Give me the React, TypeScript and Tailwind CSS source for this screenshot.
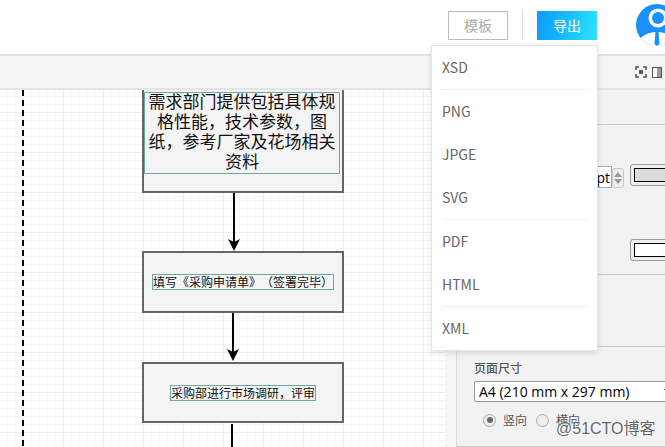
const exportGroups = [['XSD'], ['PNG', 'JPGE', 'SVG'], ['PDF', 'HTML'], ['XML']]

function Avatar() {
  return (
    <svg width="42" height="42" viewBox="0 0 42 42" className="shrink-0">
      <defs>
        <clipPath id="avatar-clip">
          <circle cx="21" cy="21" r="21" />
        </clipPath>
      </defs>
      <g clipPath="url(#avatar-clip)">
        <rect width="42" height="42" fill="#1a90fb" />
        <circle cx="22" cy="14" r="9.5" fill="#fff" />
        <circle cx="22" cy="14" r="6" fill="#1a90fb" />
        <ellipse cx="21" cy="46" rx="22" ry="18" fill="#fff" />
        <path d="M19.5 27h3l1 13-2.5 2-2.5-2z" fill="#1a90fb" />
      </g>
    </svg>
  )
}

function ExportMenu() {
  return (
    <div className="absolute left-[431px] top-[45px] z-20 w-[167px] h-[306px] bg-white border border-[#e6e6e6] shadow-[0_2px_6px_rgba(0,0,0,0.12)] px-[10px]">
      {exportGroups.map((group, i) => (
        <div key={i} className={i < exportGroups.length - 1 ? 'border-b border-[#eeeeee]' : ''}>
          {group.map((label) => (
            <div key={label} className="h-[43px] flex items-center text-[14px] text-[#666666]">
              {label}
            </div>
          ))}
        </div>
      ))}
    </div>
  )
}

function Arrow({ x, y, h }: { x: number; y: number; h: number }) {
  return (
    <svg className="absolute" style={{ left: x - 8, top: y }} width="16" height={h} viewBox={`0 0 16 ${h}`}>
      <line x1="8" y1="0" x2="8" y2={h - 6} stroke="#000" strokeWidth="2" />
      <path d={`M2 ${h - 12} L8 ${h} L14 ${h - 12} L8 ${h - 9} Z`} fill="#000" />
    </svg>
  )
}

function Canvas() {
  return (
    <div className="relative flex-1 overflow-hidden bg-white bg-[linear-gradient(#eeeeee_1px,transparent_1px),linear-gradient(90deg,#eeeeee_1px,transparent_1px),linear-gradient(#f8f8f8_1px,transparent_1px),linear-gradient(90deg,#f8f8f8_1px,transparent_1px)] bg-[length:40px_40px,40px_40px,8px_8px,8px_8px] bg-[position:23px_22px,23px_0,23px_6px,23px_0] font-['Noto_Sans_CJK_SC',sans-serif] [text-spacing-trim:space-all]">
      {/* swimlane edge */}
      <div className="absolute left-[22px] top-0 bottom-0 w-[2px] bg-[repeating-linear-gradient(#000_0_6px,transparent_6px_10px)]" />

      {/* nodes */}
      <div className="absolute left-[142px] top-[-2px] w-[202px] h-[105px] bg-[#f4f4f4] border-2 border-t-0 border-[#666666]">
        <div className="mt-[4px] w-[196px] h-[82px] border border-[#6aaa9f] text-center text-[17px] leading-[20px] text-[#111111]">
          <p className="-mt-[2px]">需求部门提供包括具体规格性能，技术参数，图纸，参考厂家及花场相关资料</p>
        </div>
      </div>

      <Arrow x={234} y={103} h={58} />

      <div className="absolute left-[142px] top-[161px] w-[202px] h-[62px] bg-[#f4f4f4] border-2 border-[#666666] flex items-center justify-center">
        <div className="w-[182px] h-[16px] border border-[#6aaa9f] text-center text-[12px] leading-[14px] text-[#111111] whitespace-nowrap">
          填写《采购申请单》（签署完毕）
        </div>
      </div>

      <Arrow x={233} y={223} h={48} />

      <div className="absolute left-[142px] top-[272px] w-[202px] h-[61px] bg-[#f4f4f4] border-2 border-[#666666] flex items-center justify-center">
        <div className="w-[146px] h-[16px] border border-[#6aaa9f] text-center text-[12px] leading-[14px] text-[#111111] whitespace-nowrap">
          采购部进行市场调研，评审
        </div>
      </div>

      <div className="absolute left-[231px] top-[334px] w-[2px] h-[30px] bg-black" />
    </div>
  )
}

function ColorSwatch({ fill }: { fill: string }) {
  return (
    <div className="w-[50px] h-[22px] rounded-[3px] border border-[#999999] bg-[#efefef] p-[3px] pr-0">
      <div className={`h-full border border-black ${fill}`} />
    </div>
  )
}

function SidePanel() {
  return (
    <aside className="w-[220px] shrink-0 flex bg-[#f2f2f2]">
      <div className="w-[11px] shrink-0 bg-[#f6f6f6]" />
      <div className="flex-1 min-w-0 border-l border-[#dddddd] overflow-hidden flex flex-col">
        <div className="h-[35px] shrink-0 border-b border-[#c8c8c8]" />

        <div className="h-[150px] shrink-0 border-b border-[#c8c8c8] pl-[173px] relative">
          <div className="pt-[39px]">
            <ColorSwatch fill="bg-[#dcdcdc]" />
          </div>
          <div className="pt-[53px]">
            <ColorSwatch fill="bg-white" />
          </div>
          <div className="absolute left-[100px] top-[41px] w-[55px] h-[22px] bg-white border border-[#aaaaaa] flex items-center justify-end pr-[1px] text-[14px] text-black font-['Open_Sans',sans-serif]">
            pt
          </div>
          <div className="absolute left-[155px] top-[43px] w-[12px] h-[20px] rounded-[3px] border border-[#c8c8c8] bg-[#eeeeee] flex flex-col items-center justify-center gap-[2px]">
            <div className="w-0 h-0 border-x-[4px] border-x-transparent border-b-[5px] border-b-[#999999]" />
            <div className="w-0 h-0 border-x-[4px] border-x-transparent border-t-[5px] border-t-[#999999]" />
          </div>
        </div>

        <div className="h-[72px] shrink-0 border-b border-[#c8c8c8]" />

        <div className="h-[100px] shrink-0 border-b border-[#c8c8c8] pl-[17px] pt-[13px]">
          <div className="text-[12px] leading-[16px] font-medium text-[#555555]">页面尺寸</div>
          <div className="mt-[5px] w-[210px] h-[21px] bg-white border border-[#999999] rounded-[2px] flex items-center pl-[4px] text-[14px] text-black font-['Open_Sans',sans-serif]">
            <span className="whitespace-nowrap">A4 (210 mm x 297 mm)</span>
            <span className="ml-[34px] w-0 h-0 border-x-[4px] border-x-transparent border-t-[5px] border-t-black" />
          </div>
          <div className="mt-[9px] pl-[9px] flex items-center text-[12px] text-[#555555]">
            <span className="w-[13px] h-[13px] rounded-full border border-[#aaaaaa] bg-[#eeeeee] flex items-center justify-center">
              <span className="w-[6px] h-[6px] rounded-full bg-[#666666]" />
            </span>
            <span className="ml-[7px]">竖向</span>
            <span className="ml-[9px] w-[13px] h-[13px] rounded-full border border-[#aaaaaa] bg-[#eeeeee]" />
            <span className="ml-[7px]">横向</span>
          </div>
        </div>
      </div>
    </aside>
  )
}

export default function App() {
  return (
    <div className="relative w-[665px] h-[447px] overflow-hidden bg-white flex flex-col font-['Noto_Sans_CJK_SC',sans-serif]">
      {/* Header */}
      <header className="h-[56px] shrink-0 border-b-2 border-[#e4e4e4] flex items-start pl-[448px] overflow-hidden">
        <button className="shrink-0 mt-[11px] w-[60px] h-[29px] border border-[#bbbbbb] text-[14px] text-[#aaaaaa]">模板</button>
        <div className="shrink-0 mt-[10px] ml-[14px] w-px h-[30px] bg-[#dddddd]" />
        <button className="shrink-0 mt-[11px] ml-[14px] w-[60px] h-[29px] bg-[linear-gradient(100deg,#0a9bff,#2be3ff)] text-[14px] text-white">导出</button>
        <div className="shrink-0 mt-[4px] ml-[39px]">
          <Avatar />
        </div>
      </header>

      {/* Toolbar */}
      <div className="h-[34px] shrink-0 bg-[#f4f4f4] border-b-2 border-[#e4e4e4] flex items-center justify-end pr-[3px] gap-[5px]">
        <svg width="12" height="12" viewBox="0 0 12 12" fill="none" stroke="#555" strokeWidth="1.6">
          <path d="M1 4V1h3M8 1h3v3M11 8v3H8M4 11H1V8" />
          <rect x="4" y="4" width="4" height="4" fill="#555" stroke="none" />
        </svg>
        <svg width="10" height="11" viewBox="0 0 10 11">
          <rect x="0.5" y="0.5" width="9" height="10" fill="#fff" stroke="#555" />
          <rect x="5" y="1" width="4" height="9" fill="#999" />
        </svg>
      </div>

      <div className="flex-1 min-h-0 flex">
        <Canvas />
        <SidePanel />
      </div>

      <ExportMenu />

      {/* watermark */}
      <div className="absolute left-[556px] top-[419px] z-30 text-[16px] leading-[20px] text-[#666666] [text-shadow:0_0_2px_#fff,0_0_2px_#fff] whitespace-nowrap font-['Liberation_Sans','Noto_Sans_CJK_SC',sans-serif]">
        @51CTO博客
      </div>
    </div>
  )
}
